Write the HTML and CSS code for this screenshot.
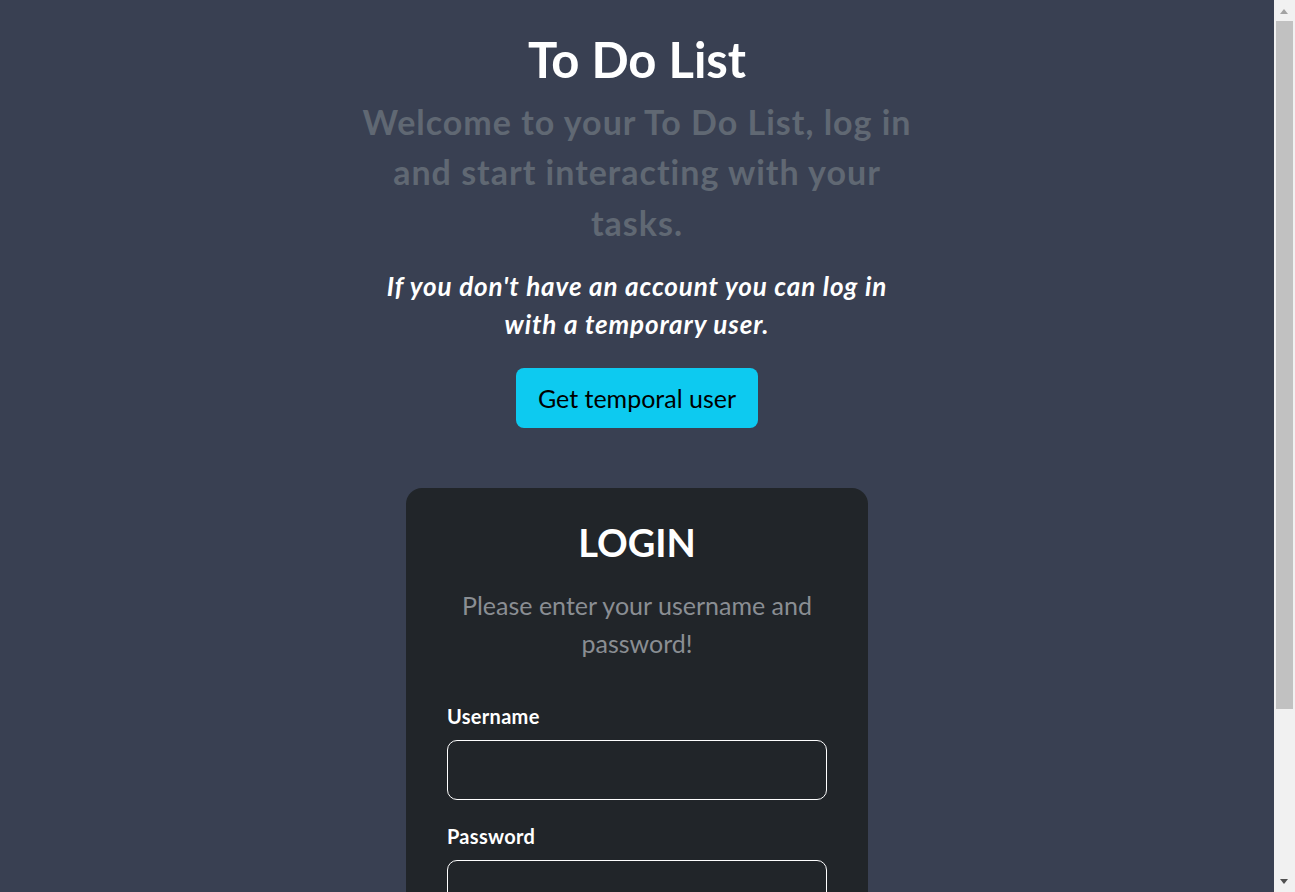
FILE: index.html
```html
<!DOCTYPE html>
<html lang="en">
<head>
<meta charset="utf-8">
<title>To Do List</title>
<link rel="stylesheet" href="styles.css">
</head>
<body>
<main class="page">
  <section class="intro">
    <h1 class="title">To Do List</h1>
    <h2 class="subtitle">Welcome to your To Do List, log in and start interacting with your tasks.</h2>
    <h4 class="note">If you don't have an account you can log in with a temporary user.</h4>
    <button class="btn-temp" type="button">Get temporal user</button>
  </section>
  <section class="card">
    <h2 class="card-title">LOGIN</h2>
    <p class="card-text">Please enter your username and password!</p>
    <form class="form">
      <label class="field">
        <span class="label">Username</span>
        <input class="input" type="text">
      </label>
      <label class="field">
        <span class="label">Password</span>
        <input class="input" type="password">
      </label>
      <button class="btn-login" type="button">Login</button>
    </form>
  </section>
</main>
<div class="scrollbar" aria-hidden="true">
  <span class="arrow arrow-up"></span>
  <span class="thumb"></span>
  <span class="arrow arrow-down"></span>
</div>
</body>
</html>
```
FILE: styles.css
```css
* { box-sizing: border-box; }
html, body { margin: 0; }
body {
  background: #394052;
  font-family: Lato, "Noto Sans", sans-serif;
  color: #fff;
  line-height: 1.6;
  padding-right: 21px;
}
.page {
  display: flex;
  flex-direction: column;
  align-items: center;
  padding: 30px 0 60px;
}
.intro {
  max-width: 580px;
  text-align: center;
  display: flex;
  flex-direction: column;
  align-items: center;
}
.title {
  margin: 0;
  font-size: 49px;
  font-weight: 700;
  line-height: 1.2;
}
.subtitle {
  margin: 8px 0 0;
  font-size: 34px;
  font-weight: 700;
  letter-spacing: 1px;
  color: #606873;
  line-height: 50.5px;
}
.note {
  margin: 19px 0 0;
  max-width: 520px;
  font-size: 26px;
  font-style: italic;
  font-weight: 700;
  letter-spacing: 0.9px;
  line-height: 38px;
}
.btn-temp {
  margin-top: 25px;
  background: #0dcaf0;
  color: #000;
  border: none;
  border-radius: 8px;
  font-family: inherit;
  font-size: 25px;
  line-height: 38px;
  padding: 11px 22px;
}
.card {
  margin-top: 60px;
  width: 462px;
  background: #212529;
  border-radius: 16px;
  padding: 32px 41px 48px;
  text-align: center;
}
.card-title {
  margin: 0;
  font-size: 38px;
  font-weight: 700;
  line-height: 1.2;
}
.card-text {
  margin: 20px 0 0;
  font-size: 25px;
  color: #8a8e93;
  line-height: 38px;
}
.form {
  margin-top: 42px;
  display: flex;
  flex-direction: column;
  gap: 24px;
  text-align: left;
}
.field {
  display: flex;
  flex-direction: column;
  gap: 12px;
}
.label {
  font-size: 20px;
  font-weight: 700;
  letter-spacing: 0.3px;
  line-height: 24px;
}
.input {
  height: 60px;
  background: #212529;
  border: 1px solid #fff;
  border-radius: 10px;
  color: #fff;
  font-size: 20px;
  padding: 0 14px;
}
.btn-login {
  align-self: center;
  margin-top: 24px;
  background: transparent;
  color: #fff;
  border: 1px solid #fff;
  border-radius: 8px;
  font-family: inherit;
  font-size: 24px;
  padding: 8px 40px;
}
.scrollbar {
  position: fixed;
  top: 0;
  right: 0;
  width: 21px;
  height: 100vh;
  background: #f1f1f1;
}
.thumb {
  position: absolute;
  top: 21px;
  left: 2px;
  width: 17px;
  height: 688px;
  background: #c1c1c1;
}
.arrow {
  position: absolute;
  left: 6px;
  width: 0;
  height: 0;
  border-left: 4.5px solid transparent;
  border-right: 4.5px solid transparent;
}
.arrow-up {
  top: 9px;
  border-bottom: 5px solid #a3a3a3;
}
.arrow-down {
  bottom: 8px;
  border-top: 5px solid #505050;
}
```
